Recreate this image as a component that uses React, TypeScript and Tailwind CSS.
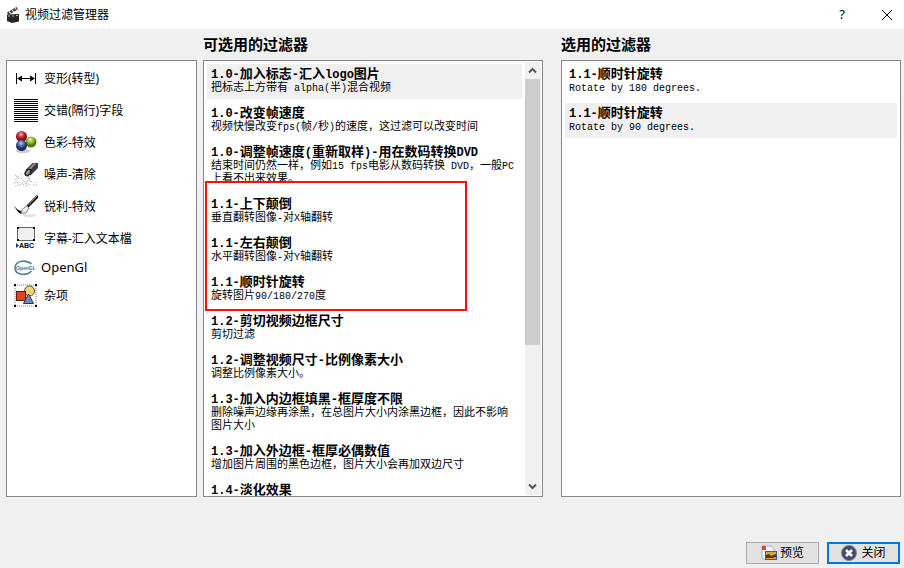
import React from "react";

type Filter = { title: string; text?: string; selected?: boolean };

const available: Filter[] = [
  {
    title: "1.0-加入标志-汇入logo图片",
    text: "把标志上方带有 alpha(半)混合视频",
    selected: true,
  },
  {
    title: "1.0-改变帧速度",
    text: "视频快慢改变fps(帧/秒)的速度，这过滤可以改变时间",
  },
  {
    title: "1.0-调整帧速度(重新取样)-用在数码转换DVD",
    text: "结束时间仍然一样，例如15 fps电影从数码转换 DVD，一般PC上看不出来效果。",
  },
  { title: "1.1-上下颠倒", text: "垂直翻转图像-对X轴翻转" },
  { title: "1.1-左右颠倒", text: "水平翻转图像-对Y轴翻转" },
  { title: "1.1-顺时针旋转", text: "旋转图片90/180/270度" },
  { title: "1.2-剪切视频边框尺寸", text: "剪切过滤" },
  { title: "1.2-调整视频尺寸-比例像素大小", text: "调整比例像素大小。" },
  {
    title: "1.3-加入内边框填黑-框厚度不限",
    text: "删除噪声边缘再涂黑，在总图片大小内涂黑边框，因此不影响图片大小",
  },
  {
    title: "1.3-加入外边框-框厚必偶数值",
    text: "增加图片周围的黑色边框，图片大小会再加双边尺寸",
  },
  { title: "1.4-淡化效果" },
];

const active: Filter[] = [
  { title: "1.1-顺时针旋转", text: "Rotate by 180 degrees." },
  { title: "1.1-顺时针旋转", text: "Rotate by 90 degrees.", selected: true },
];

const ClapperIcon = () => (
  <svg width="14" height="17" viewBox="0 0 14 17">
    <path d="M1 6.500 10.500 1l1.500 2.500L2.500 9z" fill="#333" />
    <path d="m3 5.500 2 2M6 4l2 2M9 2l1.500 2" stroke="#ddd" strokeWidth="1.200" />
    <path d="M1 8.500 13 8v7.500L6 17l-5-2z" fill="#252525" />
    <path d="M2 10h2M6 10h2M10 9.500h2" stroke="#bbb" />
  </svg>
);

const TransformIcon = () => (
  <svg width="24" height="24" viewBox="0 0 24 24">
    <path d="M2.500 6v11M21.500 6v11M4 11.500h16" stroke="#000" />
    <path d="m3 11.500 5-3v6zM21 11.500l-5-3v6z" />
  </svg>
);

const InterlaceIcon = () => (
  <svg width="24" height="24" viewBox="0 0 24 24" shapeRendering="crispEdges">
    <path
      d="M0 .5h24M0 2.500h24M0 4.500h24M0 6.500h24M0 8.500h24M0 10.500h24M0 12.500h24M0 14.500h24M0 16.500h24M0 18.500h24M0 20.500h24M0 22.500h24"
      stroke="#000"
    />
  </svg>
);

const ColorsIcon = () => (
  <svg width="24" height="24" viewBox="0 0 24 24">
    <defs>
      <radialGradient id="red" cx=".45" cy=".3">
        <stop stopColor="#f9b5b5" />
        <stop offset=".6" stopColor="#c4252e" />
        <stop offset="1" stopColor="#801019" />
      </radialGradient>
      <radialGradient id="green" cx=".45" cy=".3">
        <stop stopColor="#e7f5a5" />
        <stop offset=".6" stopColor="#92b52a" />
        <stop offset="1" stopColor="#587411" />
      </radialGradient>
      <radialGradient id="blue" cx=".45" cy=".3">
        <stop stopColor="#b9c9ea" />
        <stop offset=".6" stopColor="#405f9c" />
        <stop offset="1" stopColor="#1d2d59" />
      </radialGradient>
    </defs>
    <ellipse cx="9" cy="20" rx="7" ry="2" fill="#ccc" />
    <circle cx="7.500" cy="5.500" r="5.500" fill="url(#red)" />
    <circle cx="17" cy="11" r="5.500" fill="url(#green)" />
    <circle cx="7.500" cy="14.500" r="5.500" fill="url(#blue)" />
  </svg>
);

const NoiseIcon = () => (
  <svg width="24" height="24" viewBox="0 0 24 24">
    <path
      d="m1 12 4 2M6 11l3 1M1 17l5-2M0 20l6-1M1 23l7-2M7 15l3 3M9 22l3-2M12 23l5-2M17 18l2 2M19 22h4M2 14h3M11 18l-4 3M21 19l2 1"
      stroke="#b4b4b4"
      strokeDasharray="1.500 1"
    />
    <path d="M14 12v5l-2 5M15 13l1 6" stroke="#c8c8c8" fill="none" />
    <path d="m11.500 7 7-7H24v5l-7.500 7.500z" fill="#3a3a3a" />
    <path d="m15 6.500 6-6" stroke="#8c8c8c" strokeWidth="2" />
    <ellipse
      cx="14"
      cy="9.500"
      rx="2.200"
      ry="3.500"
      transform="rotate(40 14 9.500)"
      fill="#999"
      stroke="#222"
      strokeWidth="1.500"
    />
  </svg>
);

const BrushIcon = () => (
  <svg width="24" height="24" viewBox="0 0 24 24">
    <path d="M9 20q8 2 12 0" stroke="#ddd" strokeWidth="2" fill="none" />
    <path d="M0 10.500q4 6 9 5.500l-2 3Q3 17 0 10.500z" />
    <path d="M13.500 11.500 24 1" stroke="#111" strokeWidth="3" />
    <path d="m14 10.500 9-9.500" stroke="#999" />
    <path d="m7 18 1.500-4 4.500-3 2 2-3 5z" fill="#eee" stroke="#888" />
  </svg>
);

const SubtitleIcon = () => (
  <svg width="24" height="24" viewBox="0 0 24 24">
    <rect x="3.500" y=".5" width="17" height="13" fill="#f0f0f0" stroke="#666" />
    <path d="M3 0h2v2H3zM19 0h2v2h-2zM3 12h2v2H3zM19 12h2v2h-2z" />
    <path d="m2 16 3 2.500L2 21z" fill="#24386b" />
    <text x="5" y="21" fontSize="7" fontWeight="bold" fontFamily="Liberation Sans">
      ABC
    </text>
  </svg>
);

const OpenGlIcon = () => (
  <svg width="21" height="16" viewBox="0 0 21 16">
    <path
      d="M17.500 4Q14 .8 8 1.200 1 2.500 1 8t7 6.200q6 .8 9.500-3.200"
      fill="none"
      stroke="#4d819f"
      strokeWidth="1.600"
    />
    <text x="2" y="10" fontSize="5" fontWeight="bold" fill="#39718f" fontFamily="Liberation Sans">
      OpenGL
    </text>
  </svg>
);

const MiscIcon = () => (
  <svg width="24" height="24" viewBox="0 0 24 24">
    <rect x="1" y="1" width="21" height="21" fill="none" stroke="#777" strokeDasharray="1 1" />
    <path d="M0 0h2v2H0zM21 0h2v2h-2zM0 21h2v2H0zM21 21h2v2h-2z" />
    <circle cx="15.500" cy="7" r="5" fill="#f4d17c" stroke="#5d4a20" />
    <rect x="2.500" y="7.500" width="9" height="9" fill="#df421d" stroke="#5e1b0c" />
    <path d="m14.500 10 5 9.500h-10z" fill="#7189b3" stroke="#25395f" />
  </svg>
);

const PreviewIcon = () => (
  <svg width="16" height="16" viewBox="0 0 16 16">
    <path d="M1 1h9l3 3v10H1z" fill="#f5f7ff" stroke="#a5b2d0" />
    <path d="M1 1h4v4H1z" fill="#e23b3b" />
    <rect x="4.500" y="6.500" width="11" height="8" fill="#e3a238" stroke="#315bb0" />
    <path d="M5 13v-3l3-1 2 2 5-2v3l-4 1z" fill="#56330d" />
  </svg>
);

const CloseIcon = () => (
  <svg width="16" height="16" viewBox="0 0 16 16">
    <circle cx="8" cy="8" r="7.500" fill="#414c70" stroke="#7d859b" />
    <path d="m5 5 6 6M11 5l-6 6" stroke="#fff" strokeWidth="2.600" />
  </svg>
);

const categories = [
  { label: "变形(转型)", icon: <TransformIcon /> },
  { label: "交错(隔行)字段", icon: <InterlaceIcon /> },
  { label: "色彩-特效", icon: <ColorsIcon /> },
  { label: "噪声-清除", icon: <NoiseIcon /> },
  { label: "锐利-特效", icon: <BrushIcon /> },
  { label: "字幕-汇入文本檔", icon: <SubtitleIcon /> },
  { label: "OpenGl", icon: <OpenGlIcon />, short: true },
  { label: "杂项", icon: <MiscIcon /> },
];

// Latin runs are set one size down so two of them take about one Han cell
const Mixed = ({ text, latin }: { text: string; latin: string }) => (
  <>
    {text.split(/([\x20-\x7e]+)/).map((run, i) =>
      i % 2 ? (
        <span key={i} className={latin}>
          {run}
        </span>
      ) : (
        run
      )
    )}
  </>
);

const FilterList = ({ label, items }: { label: string; items: Filter[] }) => (
  <ul
    role="listbox"
    aria-label={label}
    className="flex min-w-0 flex-1 flex-col gap-1 overflow-y-auto p-[3px] font-['Liberation_Sans','Noto_Sans_CJK_SC',sans-serif] [scrollbar-width:none]"
  >
    {items.map((item, i) => (
      <li
        key={i}
        role="option"
        aria-selected={!!item.selected}
        className={
          item.selected
            ? "shrink-0 bg-[#f0f0f0] px-1 pt-[2px] pb-[5px]"
            : "shrink-0 px-1 pt-[2px] pb-[5px]"
        }
      >
        <div className="text-[13px] leading-[15px] font-bold whitespace-nowrap">
          <Mixed
            text={item.title}
            latin="font-['Liberation_Mono',monospace] text-[12px] leading-[8px]"
          />
        </div>
        {item.text && (
          <div className="text-[11px] leading-[13px]">
            <Mixed
              text={item.text}
              latin="font-['Liberation_Mono',monospace] text-[10px] leading-[8px]"
            />
          </div>
        )}
      </li>
    ))}
  </ul>
);

const Scrollbar = () => (
  <div className="my-px mr-px flex w-4 flex-col bg-[#f0f0f0]">
    <button aria-label="Up" className="flex h-[17px] items-center pl-[3px]">
      <svg width="9" height="7" viewBox="0 0 9 7">
        <path d="m1 5.500 3.500-3.500L8 5.500" fill="none" stroke="#555" strokeWidth="2" />
      </svg>
    </button>
    <div className="flex-1">
      <div className="mr-px h-2/3 bg-[#cdcdcd]" />
    </div>
    <button aria-label="Down" className="flex h-[17px] items-center pl-[3px]">
      <svg width="9" height="7" viewBox="0 0 9 7">
        <path d="m1 1.500 3.500 3.500L8 1.500" fill="none" stroke="#555" strokeWidth="2" />
      </svg>
    </button>
  </div>
);

export default function App() {
  return (
    <div className="flex h-screen flex-col bg-[#f0f0f0] font-['Noto_Sans','Noto_Sans_CJK_SC',sans-serif] text-[12px] text-black">
      <header className="flex h-[29px] shrink-0 items-center bg-white pl-[6px]">
        <ClapperIcon />
        <h1 className="ml-[5px] flex-1 leading-4">视频过滤管理器</h1>
        <button aria-label="Help" className="w-14 text-[13px]">
          ?
        </button>
        <button aria-label="Close window" className="flex w-[34px] justify-center">
          <svg width="12" height="12" viewBox="0 0 12 12">
            <path d="m1 1 10 10M11 1 1 11" stroke="#000" />
          </svg>
        </button>
      </header>

      <main className="flex min-h-0 flex-1 pr-[3px] pl-[6px]">
        <nav className="mt-[31px] mr-[6px] w-[191px] shrink-0 border border-[#828790] bg-white pt-[2px] pl-[7px]">
          {categories.map(({ label, icon, short }) => (
            <button
              key={label}
              className={
                short
                  ? "flex h-[25px] w-full items-center gap-[6px] text-[13px]"
                  : "flex h-8 w-full items-center gap-[6px]"
              }
            >
              {icon}
              {label}
            </button>
          ))}
        </nav>

        <section className="mr-[18px] flex min-w-0 flex-1 flex-col">
          <h2 className="h-[31px] shrink-0 text-[15px] leading-[31px] font-bold">可选用的过滤器</h2>
          <div className="relative flex min-h-0 flex-1 border border-[#828790] bg-white">
            <FilterList label="可选用的过滤器" items={available} />
            <Scrollbar />
            <div className="pointer-events-none absolute top-[120px] left-px h-[130px] w-[262px] border-2 border-[#fb0d0d]" />
          </div>
        </section>

        <section className="flex min-w-0 flex-1 flex-col">
          <h2 className="h-[31px] shrink-0 text-[15px] leading-[31px] font-bold">选用的过滤器</h2>
          <div className="flex min-h-0 flex-1 border border-[#828790] bg-white">
            <FilterList label="选用的过滤器" items={active} />
          </div>
        </section>
      </main>

      <footer className="flex h-[71px] shrink-0 items-end justify-end gap-2 pr-1 pb-1">
        <button className="flex h-[22px] w-[73px] items-center justify-center gap-[3px] border border-[#adadad] bg-[#e1e1e1]">
          <PreviewIcon />
          预览
        </button>
        <button className="flex h-[22px] w-[73px] items-center justify-center gap-1 border-2 border-[#0078d7] bg-[#e1e1e1]">
          <CloseIcon />
          关闭
        </button>
      </footer>
    </div>
  );
}
